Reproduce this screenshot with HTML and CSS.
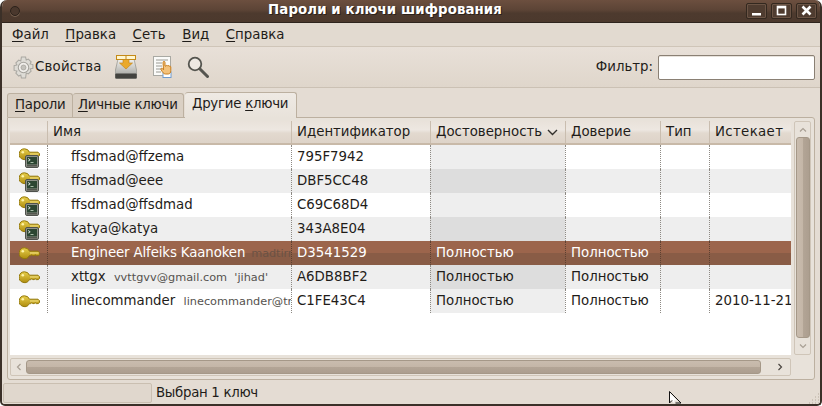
FILE: index.html
```html
<!DOCTYPE html>
<html lang="ru">
<head>
<meta charset="utf-8">
<title>Пароли и ключи шифрования</title>
<link rel="stylesheet" href="styles.css">
</head>
<body>
<svg class="defs" width="0" height="0">
  <defs>
    <linearGradient id="gold" x1="0" y1="0" x2="0" y2="1">
      <stop offset="0" stop-color="#e8cf4c"/><stop offset="1" stop-color="#b08e10"/>
    </linearGradient>
    <linearGradient id="disk" x1="0" y1="0" x2="0" y2="1">
      <stop offset="0" stop-color="#f2f2ef"/><stop offset="1" stop-color="#9a9a95"/>
    </linearGradient>
    <symbol id="key" viewBox="0 0 21 13">
      <path d="M5.500.800a5.400 5.400 0 0 1 5 3.400H19l1.500 1.500v1.800l-1.200 1.100h-2.100l-1-.8-1 .8h-1.400l-1-.8-1 .8h-1.400a5.400 5.400 0 1 1-5-7.800z" fill="url(#gold)" stroke="#93780a" stroke-width="1"/>
      <circle cx="3.800" cy="4.300" r="1.300" fill="#fff3a6"/>
      <path d="M11 6h8.500" stroke="#f5e486" stroke-width="1" fill="none"/>
    </symbol>
    <symbol id="term" viewBox="0 0 14 13">
      <rect x=".5" y=".5" width="13" height="12" rx="1.500" fill="#8e9189" stroke="#4f524c"/>
      <rect x="2" y="2" width="10" height="7.500" fill="#2c4632"/>
      <path d="M3.200 3.500l2 1.300-2 1.300" stroke="#dbe6db" fill="none"/>
      <path d="M5.500 7.500h3" stroke="#a8bca8"/>
      <rect x="2" y="10" width="10" height="1.500" fill="#54574f"/>
    </symbol>
  </defs>
</svg>

<div class="window">
  <header class="titlebar">
    <span class="menu-dot"></span>
    <h1 class="title">Пароли и ключи шифрования</h1>
    <div class="wm-buttons">
      <span class="wm-btn"><svg width="21" height="15" viewBox="0 0 21 15"><rect x="6" y="10" width="9" height="2.500" fill="#fff"/></svg></span>
      <span class="wm-btn"><svg width="21" height="15" viewBox="0 0 21 15"><rect x="6.500" y="3.500" width="8" height="8" fill="none" stroke="#fff" stroke-width="1.600"/><rect x="6" y="3" width="9" height="2.400" fill="#fff"/></svg></span>
      <span class="wm-btn"><svg width="21" height="15" viewBox="0 0 21 15"><path d="M6.500 3.500l8 8M14.500 3.500l-8 8" stroke="#fff" stroke-width="2.600"/></svg></span>
    </div>
  </header>

  <nav class="menubar">
    <span class="menu-item"><u>Ф</u>айл</span>
    <span class="menu-item"><u>П</u>равка</span>
    <span class="menu-item"><u>С</u>еть</span>
    <span class="menu-item"><u>В</u>ид</span>
    <span class="menu-item"><u>С</u>правка</span>
  </nav>

  <div class="toolbar">
    <div class="tool tool-props">
      <svg width="23" height="23" viewBox="0 0 22 22">
        <path d="M9 1h4l.6 2.800 2-.9 2.700 2.700-1 2 2.700.6v3.600l-2.700.6 1 2-2.700 2.800-2-1L13 21H9l-.6-2.800-2 1-2.700-2.800 1-2-2.700-.6V9.200l2.700-.6-1-2 2.700-2.700 2 .9z" fill="#dedcd6" stroke="#aaa8a2"/>
        <circle cx="11" cy="11" r="5" fill="#f0eeea" stroke="#a5a39d"/>
        <circle cx="11" cy="11" r="2.400" fill="#c4c2bc" stroke="#9c9a94" stroke-width=".6"/>
      </svg>
      <span>Свойства</span>
    </div>
    <svg class="tool-icon icon-drive" width="22" height="24" viewBox="0 0 22 24">
      <path d="M3 4h16l3 13v5a1.500 1.500 0 0 1-1.500 1.500h-19A1.500 1.500 0 0 1 0 22v-5z" fill="url(#disk)" stroke="#85857e" stroke-width=".6"/>
      <rect x=".3" y="18.500" width="21.400" height="5" rx="1" fill="#43433f"/>
      <rect x="1.500" y=".5" width="19" height="4" fill="#fff6d0" stroke="#c48a18"/>
      <path d="M11 1v3" stroke="#c48a18"/>
      <path d="M8 4.500h6V8h3.500L11 14 4.500 8H8z" fill="#eaa92a" stroke="#c0821a" stroke-width=".6"/>
    </svg>
    <svg class="tool-icon icon-doc" width="20" height="22" viewBox="0 0 20 22">
      <rect x=".5" y=".5" width="17" height="19" fill="#fbfbf9" stroke="#a9a9a3"/>
      <path d="M3 4h12M3 7h6M3 10h6M3 13h6M3 16h5" stroke="#9a9a94"/>
      <rect x="10" y="16" width="8" height="5.500" fill="#fff" stroke="#6f9bcf"/>
      <path d="M10 6.500c0-1.500 2-1.500 2 0V10l1 .1c0-1 1.600-1 1.600 0 .3-.8 1.600-.7 1.600.3.400-.6 1.600-.4 1.600.6v3.500c0 2-1 3.500-2.500 3.500h-3c-1.500 0-3-2-4.300-4.500-.5-1 .8-1.800 1.500-.9l1.100 1.300z" fill="#f3c27c" stroke="#c97f1f"/>
    </svg>
    <svg class="tool-icon icon-search" width="22" height="22" viewBox="0 0 22 22">
      <circle cx="8" cy="8" r="6.300" fill="#f4f2ee" fill-opacity=".55" stroke="#55554f" stroke-width="1.800"/>
      <path d="M13 13l7.500 7.500" stroke="#55554f" stroke-width="3" stroke-linecap="round"/>
    </svg>
    <label class="filter">
      <span>Фильтр:</span>
      <input class="filter-input" type="text">
    </label>
  </div>

  <div class="tabs">
    <span class="tab"><u>П</u>ароли</span>
    <span class="tab"><u>Л</u>ичные ключи</span>
    <span class="tab tab-active">Другие <u>к</u>лючи</span>
  </div>

  <section class="panel">
    <div class="tree-wrap">
      <div class="tree">
        <div class="row head">
          <span class="cell"></span>
          <span class="cell">Имя</span>
          <span class="cell">Идентификатор</span>
          <span class="cell">Достоверность
            <svg class="sort" width="11" height="7" viewBox="0 0 11 7"><path d="M1 1l4.500 4.500L10 1" fill="none" stroke="#33302c" stroke-width="1.400"/></svg>
          </span>
          <span class="cell">Доверие</span>
          <span class="cell">Тип</span>
          <span class="cell head-expires">Истекает</span>
        </div>
        <div class="row">
          <span class="cell icon icon-combo"><svg class="key" width="21" height="13"><use href="#key"/></svg><svg class="term" width="14" height="13"><use href="#term"/></svg></span>
          <span class="cell name">ffsdmad@ffzema</span>
          <span class="cell">795F7942</span>
          <span class="cell sorted"></span><span class="cell"></span><span class="cell"></span><span class="cell"></span>
        </div>
        <div class="row alt">
          <span class="cell icon icon-combo"><svg class="key" width="21" height="13"><use href="#key"/></svg><svg class="term" width="14" height="13"><use href="#term"/></svg></span>
          <span class="cell name">ffsdmad@eee</span>
          <span class="cell">DBF5CC48</span>
          <span class="cell sorted"></span><span class="cell"></span><span class="cell"></span><span class="cell"></span>
        </div>
        <div class="row">
          <span class="cell icon icon-combo"><svg class="key" width="21" height="13"><use href="#key"/></svg><svg class="term" width="14" height="13"><use href="#term"/></svg></span>
          <span class="cell name">ffsdmad@ffsdmad</span>
          <span class="cell">C69C68D4</span>
          <span class="cell sorted"></span><span class="cell"></span><span class="cell"></span><span class="cell"></span>
        </div>
        <div class="row alt">
          <span class="cell icon icon-combo"><svg class="key" width="21" height="13"><use href="#key"/></svg><svg class="term" width="14" height="13"><use href="#term"/></svg></span>
          <span class="cell name">katya@katya</span>
          <span class="cell">343A8E04</span>
          <span class="cell sorted"></span><span class="cell"></span><span class="cell"></span><span class="cell"></span>
        </div>
        <div class="row selected">
          <span class="cell icon"><svg class="key" width="21" height="13"><use href="#key"/></svg></span>
          <span class="cell name">Engineer Alfeiks Kaanoken <small>madtirra@gmail.com</small></span>
          <span class="cell">D3541529</span>
          <span class="cell sorted">Полностью</span><span class="cell">Полностью</span><span class="cell"></span><span class="cell"></span>
        </div>
        <div class="row alt">
          <span class="cell icon"><svg class="key" width="21" height="13"><use href="#key"/></svg></span>
          <span class="cell name">xttgx <small>vvttgvv@gmail.com&nbsp; 'jihad'</small></span>
          <span class="cell">A6DB8BF2</span>
          <span class="cell sorted">Полностью</span><span class="cell">Полностью</span><span class="cell"></span><span class="cell"></span>
        </div>
        <div class="row">
          <span class="cell icon"><svg class="key" width="21" height="13"><use href="#key"/></svg></span>
          <span class="cell name">linecommander <small>linecommander@trash-mail.com</small></span>
          <span class="cell">C1FE43C4</span>
          <span class="cell sorted">Полностью</span><span class="cell">Полностью</span><span class="cell"></span><span class="cell">2010-11-21</span>
        </div>
      </div>
      <div class="hscroll">
        <svg class="arrow" width="8" height="8" viewBox="0 0 8 8"><path d="M5.500 1L2.500 4l3 3" fill="none" stroke="#a89f94" stroke-width="1.200"/></svg>
        <span class="hthumb"></span>
        <svg class="arrow" width="8" height="8" viewBox="0 0 8 8"><path d="M2.500 1l3 3-3 3" fill="none" stroke="#4a4540" stroke-width="1.200"/></svg>
      </div>
    </div>
    <div class="vscroll">
      <svg class="arrow" width="8" height="8" viewBox="0 0 8 8"><path d="M1 5.500l3-3 3 3" fill="none" stroke="#a89f94" stroke-width="1.200"/></svg>
      <span class="vthumb"></span>
      <svg class="arrow" width="8" height="8" viewBox="0 0 8 8"><path d="M1 2.500l3 3 3-3" fill="none" stroke="#a89f94" stroke-width="1.200"/></svg>
    </div>
  </section>

  <footer class="statusbar">
    <span class="status-frame"></span>
    <span class="status-text">Выбран 1 ключ</span>
  </footer>

  <svg class="grip" width="12" height="12" viewBox="0 0 12 12"><path d="M10 2h1M7 5h1M10 5h1M4 8h1M7 8h1M10 8h1M1 11h1M4 11h1M7 11h1M10 11h1" stroke="#b5aa9c"/></svg>
  <svg class="cursor" width="13" height="13" viewBox="0 0 13 13"><path d="M1 2v8l2-1.500 1 3h2L5 9.500h3z" fill="#fff"/><path d="M.5.500V12M.5.500L12 12H6.500M.5 12L3 9.500" fill="none" stroke="#111" stroke-width="1"/></svg>
</div>
</body>
</html>
```

FILE: styles.css
```css
* { box-sizing: border-box; }
html, body { margin: 0; padding: 0; background: #fff; }
body { font: 13.33px/16px "DejaVu Sans", sans-serif; color: #1f1c19; overflow: hidden; }
.defs { position: absolute; }
u { text-underline-offset: 2px; }

.window {
  position: relative;
  width: 822px;
  height: 406px;
  display: flex;
  flex-direction: column;
  background: #e4dcd3;
  border: 1px solid #3b3028;
  border-top: 0;
  border-left-width: 2px;
  border-right-width: 2px;
  border-bottom-width: 2px;
  border-radius: 7px 7px 5px 5px;
  overflow: hidden;
}

.titlebar {
  flex: 0 0 23px;
  margin: 0 -2px;
  display: flex;
  align-items: center;
  padding: 0 5px 0 10px;
  background: linear-gradient(#6c4f3f 0, #5c4436 45%, #4d3a2e 60%, #4c392d 100%);
  border-bottom: 1px solid #2e241d;
}
.menu-dot { width: 10px; height: 10px; border-radius: 50%; background: #4a382d; border: 1px solid #2c221b; box-shadow: 0 1px 0 #77604f; }
.title {
  flex: 1;
  margin: 0 0 2px;
  text-align: center;
  font-size: 13.33px;
  font-weight: bold;
  line-height: 16px;
  color: #fff;
  text-shadow: 1px 1px 0 #2c211a;
  padding-left: 4px;
  letter-spacing: .1px;
}
.wm-buttons { display: flex; gap: 4px; }
.wm-btn { width: 21px; height: 16px; display: block; border: 1px solid #33281f; border-radius: 2px; background: #4f3c30; box-shadow: inset 0 0 0 1px #6b5445; overflow: hidden; }
.wm-btn svg { display: block; margin: -1px 0 0 -1px; }

.menubar {
  flex: 0 0 24px;
  display: flex;
  align-items: center;
  gap: 16.500px;
  padding: 0 0 0 10px;
  background: #e2dad0;
  border-bottom: 1px solid #cfc5b8;
  box-shadow: 0 1px 0 #efe9e2;
}
.menu-item { display: block; }

.toolbar {
  flex: 0 0 41px;
  display: flex;
  align-items: center;
  padding: 0 5px 0 10px;
  background: linear-gradient(#e8e0d8, #dfd6cb);
  border-bottom: 1px solid #cbc1b4;
}
.tool { display: flex; align-items: center; gap: 0; letter-spacing: .2px; }
.tool-icon { display: block; flex: none; }
.icon-drive { margin-left: 13px; }
.icon-doc { margin-left: 16px; }
.icon-search { margin-left: 14px; }
.filter { margin-left: auto; display: flex; align-items: center; gap: 5px; }
.filter-input {
  width: 157px;
  height: 25px;
  margin: 0;
  background: #fff;
  border: 1px solid #8a8074;
  border-radius: 2px;
  box-shadow: inset 0 1px 0 #e8e3dc;
  outline: 0;
}

.tabs {
  flex: 0 0 29px;
  display: flex;
  align-items: flex-end;
  padding-left: 5px;
  background: #e4dcd3;
}
.tab {
  display: block;
  height: 24px;
  padding: 3px 0 0 5px;
  background: #dad0c4;
  border: 1px solid #bcb0a0;
  border-left-width: 0;
  border-bottom: 0;
  border-radius: 3px 3px 0 0;
  white-space: nowrap;
  letter-spacing: -.25px;
  width: 111px;
}
.tab:first-child { border-left-width: 1px; width: 66px; padding-left: 7px; }
.tab-active {
  height: 26px;
  padding: 3px 0 0 7px;
  background: linear-gradient(#efeae4, #e8e2da);
  border-left-width: 0;
  margin-left: 1px;
  width: 112px;
  position: relative;
  top: 1px;
}

.panel {
  flex: 0 0 261px;
  display: flex;
  gap: 3px;
  margin: 0 5px;
  padding: 3px 3px 3px 2px;
  background: #e8e2da;
  border: 1px solid #bcb0a0;
  border-radius: 0 3px 3px 3px;
}
.tree-wrap { flex: 0 0 781px; display: flex; flex-direction: column; gap: 3px; }
.tree { height: 234px; background: #fff; overflow: hidden; }
.row {
  display: grid;
  grid-template-columns: 37px 244px 139px 135px 95px 49px 82px;
  height: 24px;
  line-height: 24px;
  background: #fff;
}
.head {
  height: 24px;
  background: linear-gradient(#e9e2da 0, #ede7e1 40%, #e2d9cf 55%, #ddd3c8 100%);
  border-bottom: 2px solid #c8b9a8;
  line-height: 22px;
}
.cell {
  display: block;
  position: relative;
  min-width: 0;
  padding-left: 5px;
  white-space: nowrap;
  overflow: hidden;
  border-left: 1px dotted #8e8a84;
}
.cell:first-child { border-left: 0; }
.head .cell { border-left: 1px solid #c9bdaf; padding-left: 5px; }
.head .cell:first-child { border-left: 0; }
.head .head-expires { letter-spacing: .35px; }
.alt { background: #eeeeee; }
.sorted { background: #eeeeee; }
.alt .sorted { background: #dddddd; }
.selected { background: linear-gradient(#9c654c 0, #9c654c 50%, #895c46 50%, #895c46 100%); color: #fff; }
.selected .sorted { background: transparent; }
.selected .cell { border-left-color: #5d4030; }
.name { padding-left: 23px; }
.name small { font-size: 11.300px; color: #55524e; margin-left: 4px; }
.selected .name { letter-spacing: -.12px; }
.selected .name small { color: #6b5244; margin-left: 2px; }
.sort { margin-left: 1px; }
.icon { overflow: visible; }
.key { position: absolute; left: 9px; top: 6px; }
.term { position: absolute; left: 15px; top: 10px; }
.icon-combo .key { top: 3px; }

.hscroll {
  height: 18px;
  display: flex;
  align-items: center;
  padding: 0 4px;
  background: #e8e2da;
  border: 1px solid #cfc5b8;
  border-radius: 2px;
}
.hthumb {
  display: block;
  width: 735px;
  height: 14px;
  margin: 0 15px 0 3px;
  border: 1px solid #a59888;
  border-radius: 3px;
  background: linear-gradient(#c9bcae 0, #c4b6a7 50%, #b3a596 50%, #ac9e8f 100%);
}
.vscroll {
  width: 18px;
  height: 234px;
  display: flex;
  flex-direction: column;
  align-items: center;
  padding: 4px 0;
  background: #e8e2da;
  border: 1px solid #cfc5b8;
  border-radius: 2px;
}
.vthumb {
  display: block;
  width: 14px;
  height: 201px;
  margin: 3px 0 4px;
  border: 1px solid #a59888;
  border-radius: 3px;
  background: linear-gradient(90deg, #c9bcae 0, #c4b6a7 50%, #b3a596 50%, #ac9e8f 100%);
}
.arrow { display: block; flex: none; }

.statusbar {
  flex: 1;
  display: flex;
  align-items: center;
  gap: 4px;
  padding: 2px 0 0 1px;
  background: #e4dcd3;
}
.status-frame {
  display: block;
  width: 149px;
  height: 20px;
  border: 1px solid #cabfb1;
  border-radius: 2px;
  background: #e0d7cd;
}
.status-text { display: block; letter-spacing: -.3px; }

.grip { position: absolute; right: 0; bottom: 0; }
.cursor { position: absolute; left: 667px; top: 391px; }
```
